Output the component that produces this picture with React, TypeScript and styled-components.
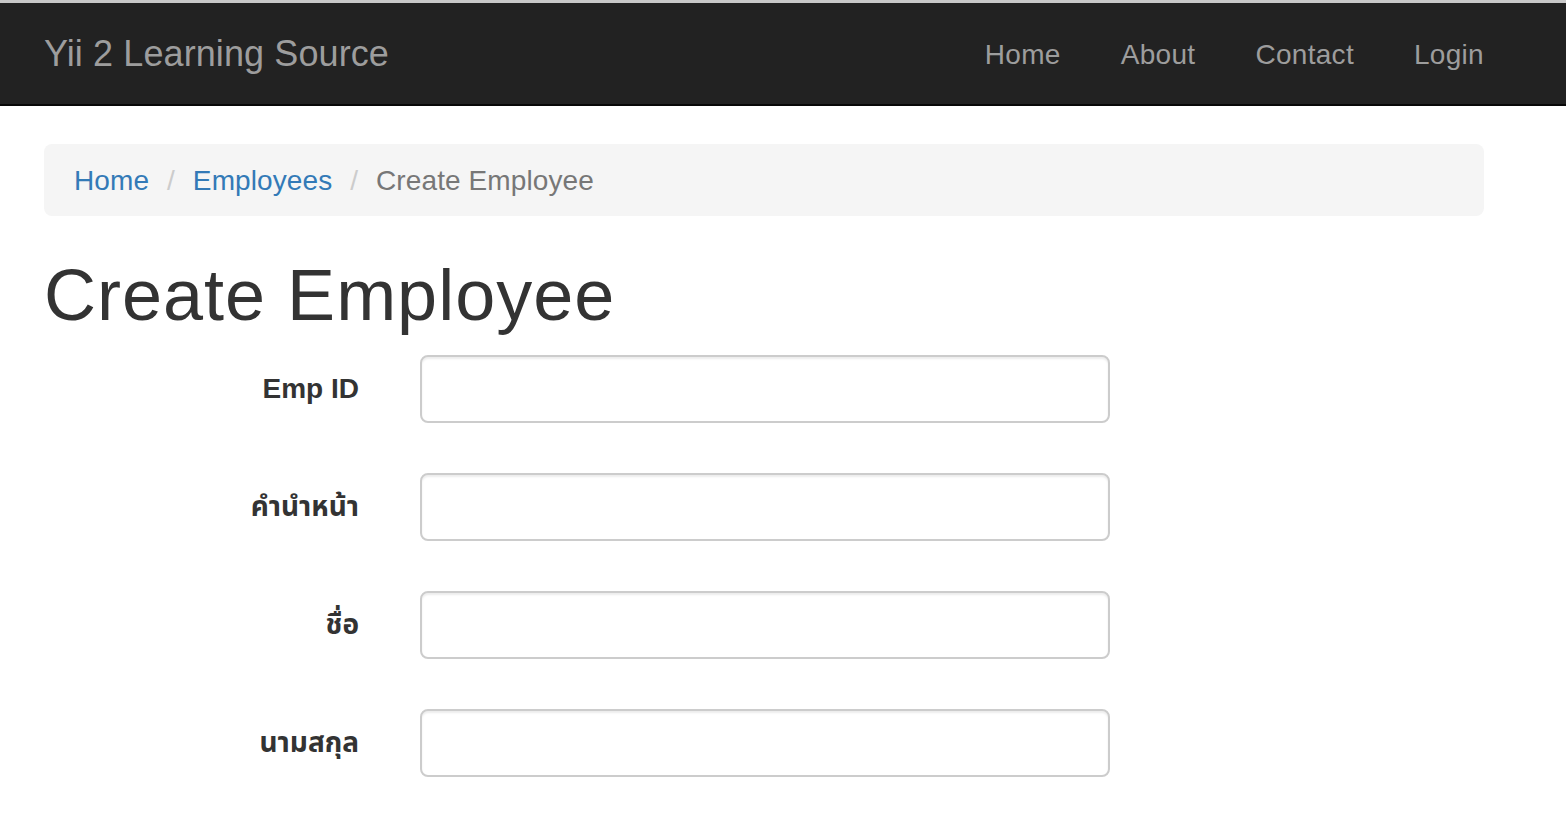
import React from "react";
import styled, { createGlobalStyle } from "styled-components";

const GlobalStyle = createGlobalStyle`
  html, body {
    margin: 0;
    padding: 0;
    background: #fff;
  }
  body {
    font-family: "Liberation Sans", "Noto Sans Thai", "Loma", "Garuda", "Tlwg Typo", "DejaVu Sans", Arial, sans-serif;
    color: #333;
  }
  * { box-sizing: border-box; }
`;

const TopStrip = styled.div`
  height: 3px;
  background: #c8c8c8;
`;

const Navbar = styled.nav`
  height: 103px;
  background: #222;
  border-bottom: 2px solid #080808;
`;

const Container = styled.div`
  width: 1500px;
  margin-left: 14px;
  padding: 0 30px;
`;

const NavInner = styled(Container)`
  display: flex;
  justify-content: space-between;
  align-items: flex-start;
  height: 101px;
`;

const Brand = styled.a`
  display: block;
  padding: 31px 0 30px;
  font-size: 36px;
  line-height: 40px;
  letter-spacing: 0.1px;
  color: #9d9d9d;
  text-decoration: none;
`;

const NavList = styled.ul`
  display: flex;
  list-style: none;
  margin: 0 -30px 0 0;
  padding: 0;
`;

const NavLink = styled.a`
  display: block;
  padding: 32px 30px 29px;
  font-size: 28px;
  line-height: 40px;
  letter-spacing: 0.3px;
  color: #9d9d9d;
  text-decoration: none;
`;

const Main = styled(Container)`
  padding-top: 38px;
`;

const Breadcrumb = styled.ol`
  display: flex;
  list-style: none;
  margin: 0 0 40px;
  padding: 17px 30px 15px;
  background: #f5f5f5;
  border-radius: 8px;
  font-size: 28px;
  line-height: 40px;
`;

const Crumb = styled.li<{ $active?: boolean; $first?: boolean }>`
  color: ${(p) => (p.$active ? "#777" : "#337ab7")};
  letter-spacing: 0.1px;
  ${(p) =>
    p.$first
      ? ""
      : `
    &::before {
      content: "/\\00a0";
      padding: 0 10px 0 18px;
      color: #ccc;
    }
  `}
`;

const CrumbLink = styled.a`
  color: #337ab7;
  text-decoration: none;
`;

const Title = styled.h1`
  margin: 0 0 20px;
  font-size: 72px;
  font-weight: 500;
  line-height: 1.1;
  letter-spacing: 1px;
  color: #333;
`;

const Form = styled.form`
  margin: 0 -30px;
`;

const FormGroup = styled.div`
  display: grid;
  grid-template-columns: 376px 750px;
  margin-bottom: 50px;
`;

const Label = styled.label`
  padding: 14px 31px 0 30px;
  text-align: right;
  font-size: 28px;
  font-weight: 700;
  line-height: 40px;
  color: #333;
`;

const InputCell = styled.div`
  padding: 0 30px;
`;

const Input = styled.input`
  display: block;
  width: 100%;
  height: 68px;
  padding: 12px 24px;
  font-size: 28px;
  border: 2px solid #ccc;
  border-radius: 8px;
  background: #fff;
  box-shadow: inset 0 2px 2px rgba(0, 0, 0, 0.075);
  outline: none;
`;

const fields = ["Emp ID", "คำนำหน้า", "ชื่อ", "นามสกุล"];

export default function App() {
  return (
    <>
      <GlobalStyle />
      <TopStrip />
      <Navbar>
        <NavInner>
          <Brand href="#">Yii 2 Learning Source</Brand>
          <NavList>
            {["Home", "About", "Contact", "Login"].map((item) => (
              <li key={item}>
                <NavLink href="#">{item}</NavLink>
              </li>
            ))}
          </NavList>
        </NavInner>
      </Navbar>
      <Main>
        <Breadcrumb>
          <Crumb $first>
            <CrumbLink href="#">Home</CrumbLink>
          </Crumb>
          <Crumb>
            <CrumbLink href="#">Employees</CrumbLink>
          </Crumb>
          <Crumb $active>Create Employee</Crumb>
        </Breadcrumb>
        <Title>Create Employee</Title>
        <Form>
          {fields.map((f) => (
            <FormGroup key={f}>
              <Label>{f}</Label>
              <InputCell>
                <Input type="text" />
              </InputCell>
            </FormGroup>
          ))}
        </Form>
      </Main>
    </>
  );
}
